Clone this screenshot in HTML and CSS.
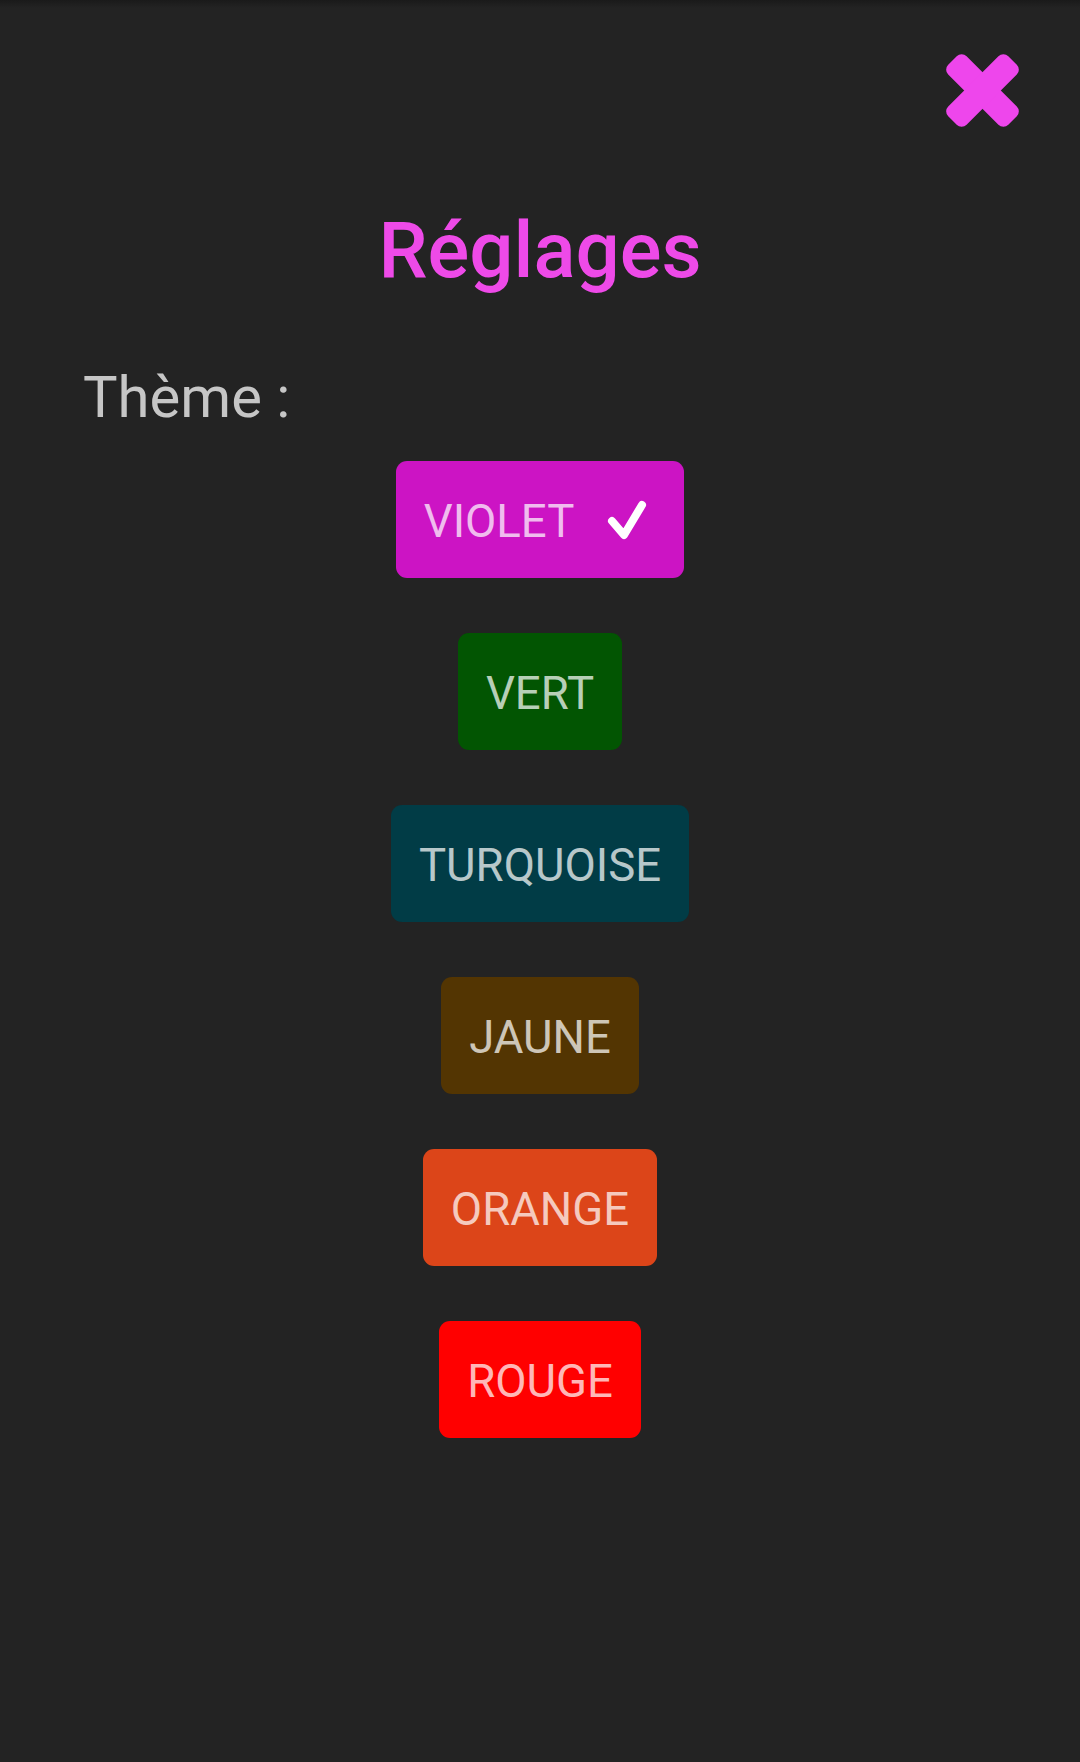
FILE: index.html
```html
<!DOCTYPE html>
<html lang="fr">
<head>
<meta charset="utf-8">
<title>Réglages</title>
<link rel="stylesheet" href="styles.css">
</head>
<body>
<div class="screen">
  <header class="topbar">
    <button class="close" aria-label="Fermer">
      <svg viewBox="0 0 73 73" width="73" height="73">
        <g transform="rotate(45 36.5 36.5)">
          <rect x="-6" y="23.5" width="85" height="26" rx="7" fill="#ee46ec"/>
          <rect x="23.5" y="-6" width="26" height="85" rx="7" fill="#ee46ec"/>
        </g>
      </svg>
    </button>
  </header>
  <h1 class="title">Réglages</h1>
  <div class="label">Thème :</div>
  <div class="themes">
    <button class="theme violet"><span>VIOLET</span>
      <svg class="check" viewBox="0 0 40 40" width="40" height="40">
        <path d="M5 21 L17 35 L35 5" fill="none" stroke="#fff" stroke-width="8" stroke-linecap="round" stroke-linejoin="round"/>
      </svg>
    </button>
    <button class="theme vert"><span>VERT</span></button>
    <button class="theme turquoise"><span>TURQUOISE</span></button>
    <button class="theme jaune"><span>JAUNE</span></button>
    <button class="theme orange"><span>ORANGE</span></button>
    <button class="theme rouge"><span>ROUGE</span></button>
  </div>
</div>
</body>
</html>
```
FILE: styles.css
```css
html, body {
  margin: 0;
  padding: 0;
  background: #232323;
}
body {
  font-family: Roboto, "Liberation Sans", sans-serif;
  min-height: 1762px;
  background: linear-gradient(#1a1a1a 0px, #232323 8px) no-repeat, #232323;
}
.screen {
  display: flex;
  flex-direction: column;
}
.topbar {
  display: flex;
  justify-content: flex-end;
  padding: 54px 61px 0 0;
}
.close {
  border: 0;
  padding: 0;
  margin: 0;
  background: none;
  width: 73px;
  height: 73px;
  display: block;
}
.close svg { display: block; }
.title {
  margin: 78px 0 0 0;
  text-align: center;
  font-size: 78px;
  line-height: 92px;
  font-weight: 500;
  color: #ee4ae8;
}
.label {
  margin: 66px 0 0 0;
  padding-left: 83px;
  font-size: 58px;
  line-height: 69px;
  color: #c6c6c6;
}
.themes {
  margin-top: 29px;
  display: flex;
  flex-direction: column;
  align-items: center;
  gap: 55px;
}
.theme {
  height: 117px;
  border: 0;
  border-radius: 11px;
  padding: 3px 28px 0 28px;
  display: flex;
  align-items: center;
  font-family: Roboto, "Liberation Sans", sans-serif;
  font-size: 45.5px;
  font-weight: 400;
  color: rgba(255, 255, 255, 0.72);
}
.theme.violet {
  padding-right: 37px;
  background: #cc14c4;
}
.theme.violet .check {
  margin-left: 33px;
  margin-top: -3px;
  display: block;
}
.theme.vert { background: #025502; }
.theme.turquoise { background: #013c46; }
.theme.jaune { background: #533502; }
.theme.orange { background: #dc4519; }
.theme.rouge { background: #ff0000; }
```
